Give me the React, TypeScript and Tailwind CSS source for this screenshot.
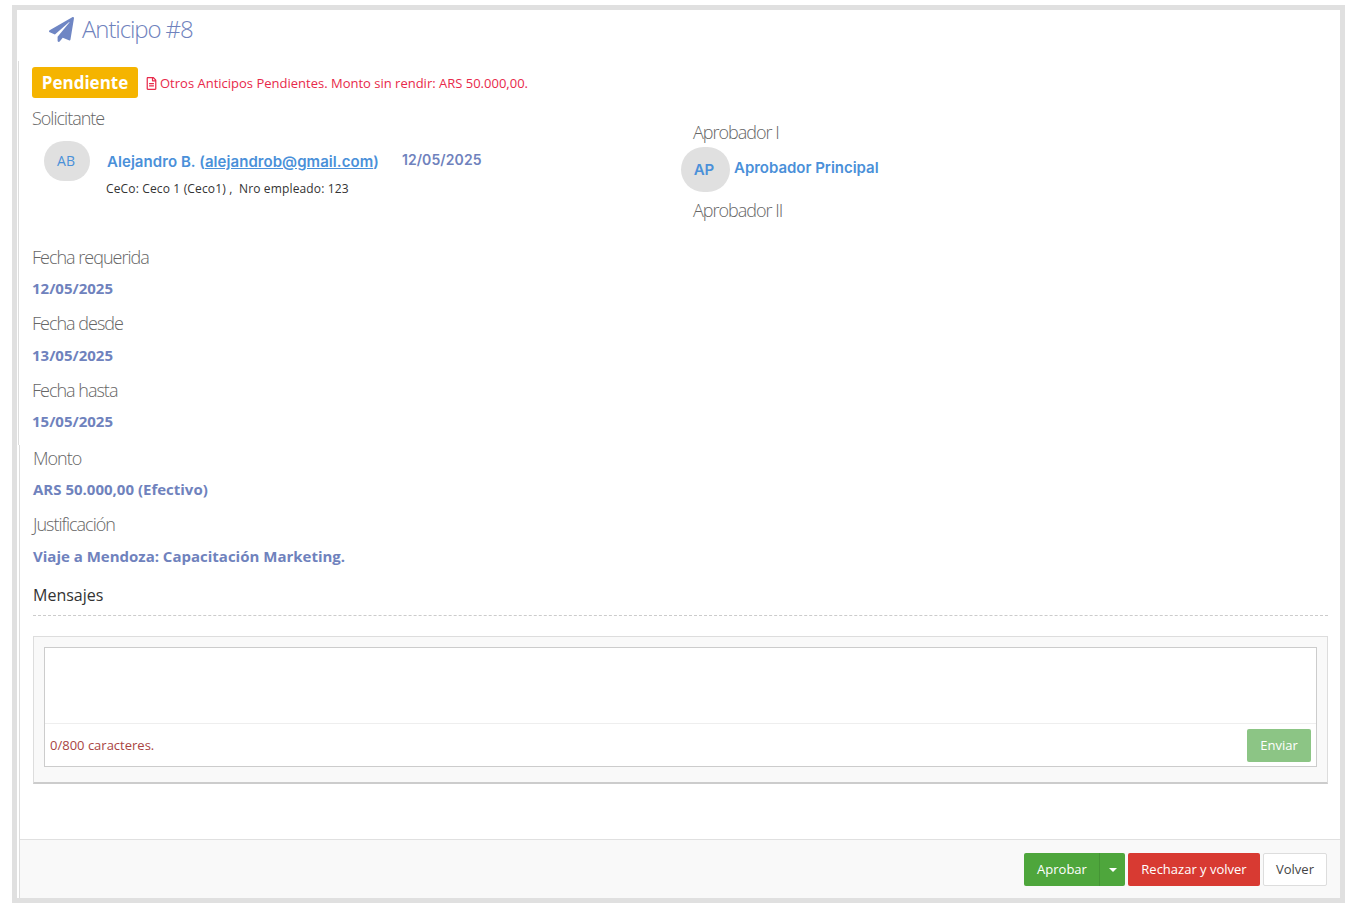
import React from "react";
import { FaPaperPlane, FaRegFileAlt } from "react-icons/fa";

const Label = ({ children, className = "" }: { children: React.ReactNode; className?: string }) => (
  <div className={`text-[18px] leading-[24px] font-light tracking-[-1px] text-[#666] ${className}`}>{children}</div>
);

const Value = ({ children, className = "" }: { children: React.ReactNode; className?: string }) => (
  <div className={`text-[15px] leading-[20px] font-bold text-[#6f82bd] ${className}`}>{children}</div>
);

const App = () => {
  return (
    <div className="w-[1350px] h-[908px] bg-white pt-[5px] pb-[5px] pl-[12px] pr-[5px] font-['Open_Sans',sans-serif] overflow-hidden">
      <div className="h-full flex flex-col border-[5px] border-[#e0e0e0] bg-white">
        <div className="h-[51px] shrink-0 flex items-center pl-[32px] pb-[13px]">
          <FaPaperPlane className="w-[25px] h-[25px] text-[#6f86c4]" />
          <span className="ml-[8px] text-[24px] leading-[32px] font-light tracking-[-1.1px] text-[#6f82bd]">Anticipo #8</span>
        </div>

        <div className="ml-px h-[384px] shrink-0 border-l border-[#ddd] pl-[13px]">
          <div className="flex items-center pt-[6px]">
            <span className="h-[31px] w-[106px] flex items-center justify-center rounded-[3px] bg-[#f5b400] text-[17px] font-bold text-white">Pendiente</span>
            <FaRegFileAlt className="ml-[8px] mt-px w-[11px] h-[13px] text-[#e8294a]" />
            <span className="ml-[3px] text-[13px] leading-[18px] text-[#e8294a]">Otros Anticipos Pendientes. Monto sin rendir: ARS 50.000,00.</span>
          </div>

          <div className="grid grid-cols-[649px_1fr]">
            <div>
              <Label className="mt-[8px]">Solicitante</Label>
              <div className="flex mt-[11px] pl-[12px]">
                <div className="w-[46px] h-[40px] rounded-full bg-[#e0e0e0] flex items-center justify-center pb-[1px] pr-[2px] text-[14px] text-[#4a90d9]">AB</div>
                <div className="ml-[17px]">
                  <div className="flex items-start font-['Inter',sans-serif]">
                    <span className="mt-[12px] text-[15px] leading-[18px] tracking-[0.06px] font-semibold text-[#4a90d9]">
                      Alejandro B. (<span className="underline">alejandrob@gmail.com</span>)
                    </span>
                    <span className="ml-[23px] mt-[10px] text-[14px] leading-[18px] tracking-[0.1px] font-semibold text-[#6f82bd]">12/05/2025</span>
                  </div>
                  <div className="-ml-px mt-[10px] text-[12px] leading-[16px] tracking-[0.15px] text-[#333]">CeCo: Ceco 1 (Ceco1) ,&nbsp; Nro empleado: 123</div>
                </div>
              </div>
            </div>
            <div className="pt-[22px]">
              <Label className="ml-[12px]">Aprobador I</Label>
              <div className="flex items-center mt-[3px]">
                <div className="w-[49px] h-[45px] rounded-full bg-[#e0e0e0] flex items-center justify-center pr-[3px] pt-[1px] font-['Inter',sans-serif] text-[15px] font-semibold text-[#4a90d9]">AP</div>
                <span className="ml-[4px] mb-[2px] font-['Inter',sans-serif] text-[15px] tracking-[-0.02px] font-semibold text-[#4a90d9]">Aprobador Principal</span>
              </div>
              <Label className="ml-[12px] mt-[6px]">Aprobador II</Label>
            </div>
          </div>

          <Label className="mt-[23px]">Fecha requerida</Label>
          <Value className="mt-[9px]">12/05/2025</Value>
          <Label className="mt-[13px]">Fecha desde</Label>
          <Value className="mt-[10px]">13/05/2025</Value>
          <Label className="mt-[13px]">Fecha hasta</Label>
          <Value className="mt-[9px]">15/05/2025</Value>
        </div>

        <div className="ml-[2px] flex-1 flex flex-col border-l border-[#ddd]">
          <div className="flex-1 pl-[13px] pr-[12px] pt-px">
            <Label>Monto</Label>
            <Value className="mt-[9px]">ARS 50.000,00 (Efectivo)</Value>
            <Label className="mt-[13px]">Justificación</Label>
            <Value className="mt-[10px]">Viaje a Mendoza: Capacitación Marketing.</Value>
            <div className="mt-[18px] pb-[9px] border-b border-dashed border-[#ccc] text-[16px] leading-[22px] text-[#333]">Mensajes</div>
            <div className="mt-[20px] h-[148px] p-[10px] bg-[#f9f9f9] border border-[#ddd] border-b-2 border-b-[#ccc]">
              <div className="h-[120px] flex flex-col border border-[#ccc] bg-white">
                <div className="h-[76px] border-b border-[#eee]"></div>
                <div className="flex-1 flex items-center justify-between pl-[5px] pr-[5px]">
                  <span className="pt-[2px] text-[13px] text-[#a94442]">0/800 caracteres.</span>
                  <button className="w-[64px] h-[33px] pt-[2px] rounded-[2px] bg-[#8cc585] text-[13px] text-white">Enviar</button>
                </div>
              </div>
            </div>
          </div>
          <div className="h-[59px] shrink-0 flex items-start justify-end gap-[3px] pt-[13px] pr-[13px] bg-[#f9f9f9] border-t border-[#e0e0e0]">
            <div className="flex h-[33px]">
              <button className="w-[76px] pl-px rounded-l-[2px] bg-[#4ea63c] border-r border-[#459535] text-[13px] text-white">Aprobar</button>
              <button className="w-[25px] rounded-r-[2px] bg-[#4ea63c] flex items-center justify-center">
                <span className="border-x-[4px] border-x-transparent border-t-[4px] border-t-white"></span>
              </button>
            </div>
            <button className="w-[132px] h-[33px] rounded-[2px] bg-[#d83a32] text-[13px] text-white">Rechazar y volver</button>
            <button className="w-[64px] h-[33px] rounded-[2px] bg-white border border-[#ddd] text-[13px] text-[#444]">Volver</button>
          </div>
        </div>
      </div>
    </div>
  );
};

export default App;
